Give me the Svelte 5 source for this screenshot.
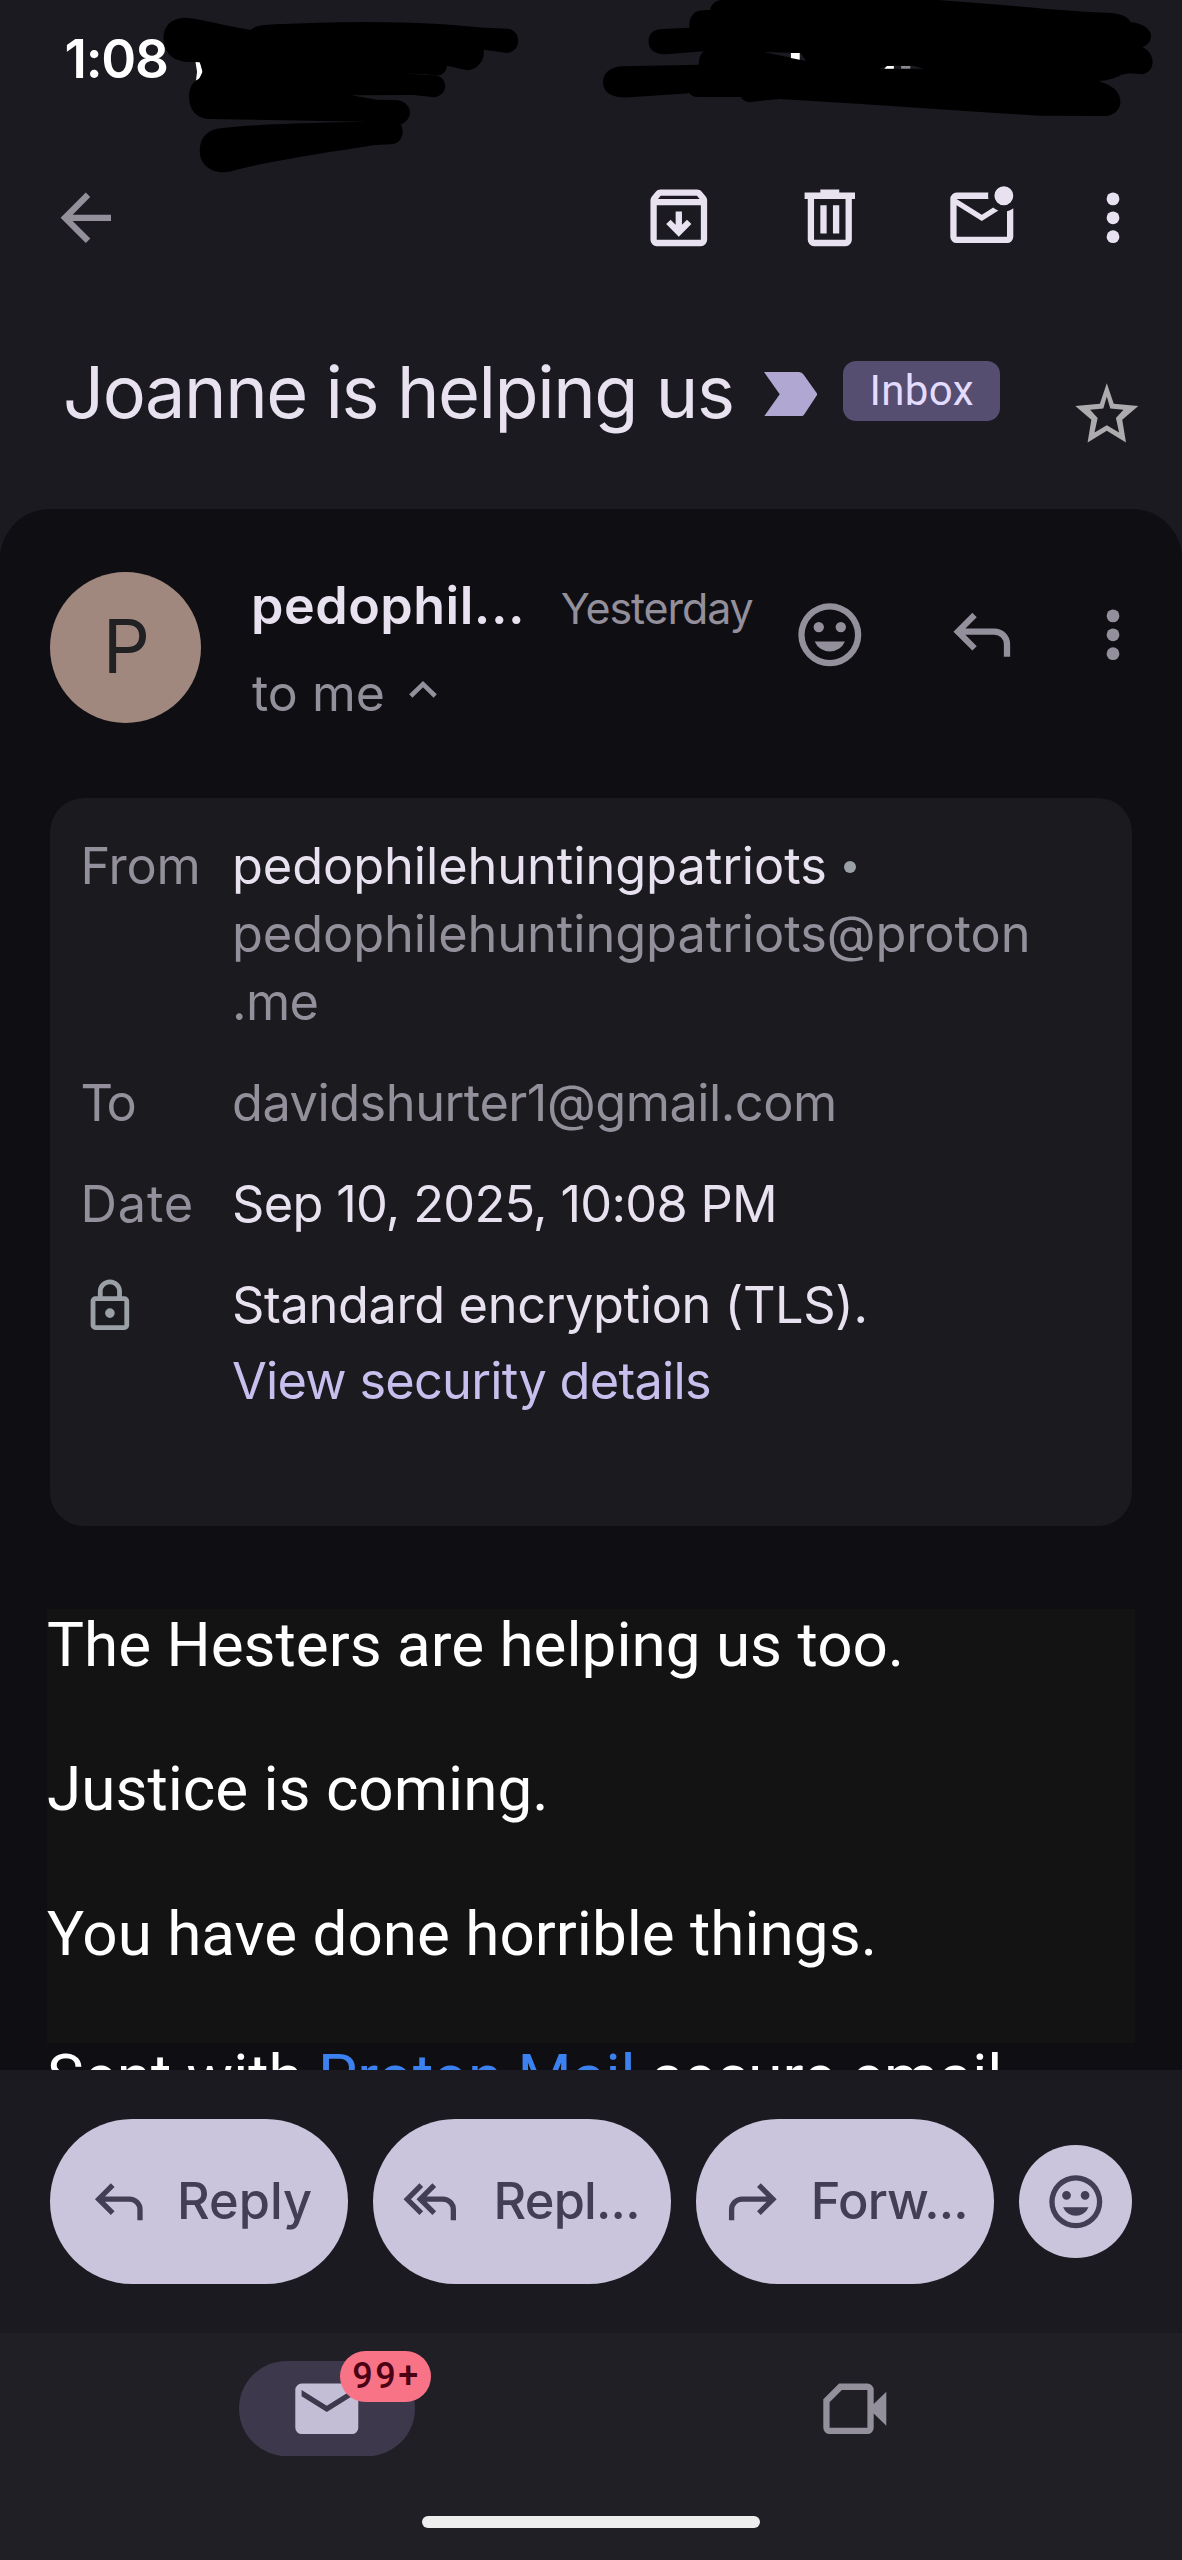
<script>
  const icons = {
    back: 'm12 20-8-8 8-8 1.4 1.425L7.825 11H20v2H7.825l5.6 5.6Z',
    archive:
      'M5 21q-.825 0-1.413-.587T3 19V6.525q0-.35.112-.675.113-.325.338-.6L4.7 3.725q.275-.35.687-.538Q5.8 3 6.25 3h11.5q.45 0 .863.187.412.188.687.538L20.55 5.25q.225.275.338.6.112.325.112.675V19q0 .825-.587 1.413T19 21ZM5.4 6h13.2l-.85-1H6.25ZM5 19h14V8H5Zm7-1 4-4-1.4-1.4-1.6 1.6V10h-2v4.2l-1.6-1.6L8 14Z',
    trash:
      'M7 21q-.825 0-1.413-.587T5 19V6H4V4h5V3h6v1h5v2h-1v13q0 .825-.587 1.413T17 21ZM17 6H7v13h10ZM9 17h2V8H9Zm4 0h2V8h-2Z',
    unread:
      'M4 20q-.825 0-1.413-.587T2 18V6q0-.825.587-1.413T4 4h10.1q-.1.5-.1 1t.1 1H4l8 5 3.65-2.275q.35.325.763.563.412.237.862.412L12 13 4 8v10h16V9.9q.575-.125 1.075-.35T22 9v9q0 .825-.587 1.413T20 20ZM19 8q-1.25 0-2.125-.875T16 5t.875-2.125T19 2t2.125.875T22 5t-.875 2.125T19 8Z',
    star:
      'M12 2 14.2 8.5 22 9.2 16.9 13.6 18.1 20.8 12 17.1 5.9 20.8 7.1 13.6 2 9.2 9.8 8.5ZM12 6.2 10.9 10 6.7 10.4 9.1 13 8.1 17.6 12 15.3 15.9 17.6 14.9 13 17.3 10.4 13.1 10Z',
    smile:
      'M12 2a10 10 0 1 0 0 20a10 10 0 1 0 0-20ZM12 4a8 8 0 1 1 0 16a8 8 0 1 1 0-16ZM8.5 7.9a1.65 1.65 0 1 0 0 3.3a1.65 1.65 0 1 0 0-3.3ZM15.5 7.9a1.65 1.65 0 1 0 0 3.3a1.65 1.65 0 1 0 0-3.3ZM7.2 14.1h9.6q-.6 1.5-1.9 2.35T12 17.3t-2.9-.85T7.2 14.1Z',
    reply:
      'M19 19v-4q0-1.25-.875-2.125T16 12H6.8l3.6 3.6L9 17l-6-6 6-6 1.4 1.4L6.8 10H16q2.075 0 3.538 1.462T21 15v4Z',
    replyAll:
      'M18 19v-4q0-1.25-.875-2.125T15 12H8.9l3.6 3.6L11.1 17l-6-6 6-6 1.4 1.4L8.9 10H15q2.075 0 3.538 1.462T20 15v4ZM6.2 17l-6-6 6-6 1.4 1.4L3 11l4.6 4.6Z',
    forward:
      'M5 19v-4q0-1.25.875-2.125T8 12h9.2l-3.6 3.6L15 17l6-6-6-6-1.4 1.4 3.6 3.6H8q-2.075 0-3.538 1.462T3 15v4Z',
    lock:
      'M6 22q-.825 0-1.413-.587T4 20V10q0-.825.587-1.413T6 8h1V6q0-2.075 1.463-3.537T12 1t3.538 1.463T17 6v2h1q.825 0 1.413.587T20 10v10q0 .825-.587 1.413T18 22ZM6 20h12V10H6Zm6-3q.825 0 1.413-.587T14 15t-.587-1.413T12 13t-1.413.587T10 15t.587 1.413T12 17ZM9 8h6V6q0-1.25-.875-2.125T12 3t-2.125.875T9 6Z',
    mail:
      'M4 20q-.825 0-1.413-.587T2 18V6q0-.825.587-1.413T4 4h16q.825 0 1.413.587T22 6v12q0 .825-.587 1.413T20 20ZM12 13l8-5V6l-8 5-8-5v2Z',
    meet:
      'M7 4h9q.825 0 1.413.587T18 6v4.5l4-3.9v10.8l-4-3.9V18q0 .825-.587 1.413T16 20H4q-.825 0-1.413-.587T2 18V9ZM7.9 6 4 9.9V18h12V6Z'
  };
  const paragraphs = ['The Hesters are helping us too.', 'Justice is coming.', 'You have done horrible things.'];
</script>

{#snippet icon(name)}
  <svg class="icon" viewBox="0 0 24 24" aria-hidden="true"><path fill-rule="evenodd" d={icons[name]} /></svg>
{/snippet}

{#snippet dots()}
  <svg class="dots" viewBox="0 0 36 75.6" aria-hidden="true">
    <circle cx="18" cy="18.9" r="6.4" /><circle cx="18" cy="37.8" r="6.4" /><circle cx="18" cy="56.7" r="6.4" />
  </svg>
{/snippet}

<div class="screen">
  <header>
    <div class="status">
      <span class="clock">1:08</span>
      <svg class="mark left" viewBox="0 0 1568 780" preserveAspectRatio="none" aria-hidden="true">
        <path fill="#fff" d="M510 180L524 188L529 216L524 232L512 244L515 215Z" />
        <path d="M482 53C520 55 560 70 655 90C665 78 680 75 720 73C860 65 1000 62 1160 73L1265 83L1325 86C1364 90 1364 155 1325 159L1264 149C1268 185 1245 210 1221 211L1168 197C1167 215 1155 225 1148 226L1050 219L1110 225L1140 226C1172 235 1172 285 1135 292L1080 285L918 286L985 299L1035 300C1080 305 1082 360 1047 373C1057 390 1055 430 1022 433L980 435C900 450 700 482 605 514C560 525 522 500 522 452C522 410 545 387 580 384C700 370 850 367 960 365L548 357C510 355 494 325 494 290C494 260 505 245 520 237L530 215L522 187L482 185C445 180 427 150 427 115C427 75 450 55 482 53Z" />
      </svg>
      <svg class="mark right" viewBox="0 0 1568 780" preserveAspectRatio="none" aria-hidden="true">
        <path d="M365 0L930 0L1100 15C1200 25 1300 35 1385 39C1410 42 1428 52 1433 66C1470 70 1487 90 1487 108C1487 125 1475 137 1465 142C1500 160 1500 215 1465 223L1430 220L1408 225C1395 235 1370 242 1350 243C1385 255 1407 275 1407 305C1407 330 1390 347 1365 348L1200 347L1110 341L700 310L515 297L440 306C425 306 418 298 416 291L300 291C290 291 285 285 281 280L125 292C80 295 55 280 55 247C55 215 80 200 105 199L305 194C305 175 310 162 318 154L220 163C190 163 174 150 174 123C174 98 190 88 210 87L281 83C278 55 290 32 315 31L335 30C337 12 350 2 365 0Z" />
        <path fill="#1b1a20" d="M475 156L572 160L586 183ZM778 206L800 197H865L893 206Z" />
        <path fill="#fff" d="M546 159H569V179L546 174ZM790 206L797 198H815V206Z" />
        <path fill="#8b8a8d" d="M834 198H858V206H834Z" />
      </svg>
    </div>
    <div class="toolbar">
      {@render icon('back')}
      <div class="tools">
        {@render icon('archive')}
        {@render icon('trash')}
        {@render icon('unread')}
        {@render dots()}
      </div>
    </div>
    <div class="subject">
      <h1>Joanne is helping us</h1>
      <svg class="important" viewBox="0 0 53.5 44.5" aria-hidden="true">
        <path d="M0 0H35Q38 0 39.5 2.5L53.5 22.3L40.5 42Q39 44.5 36 44.5H0L15.7 22.3Z" />
      </svg>
      <span class="label">Inbox</span>
      <div class="star">{@render icon('star')}</div>
    </div>
  </header>

  <main>
    <section class="sender">
      <div class="avatar">P</div>
      <div class="who">
        <div class="line"><strong>pedophil...</strong><time>Yesterday</time></div>
        <div class="line to">
          <span>to me</span>
          <svg class="caret" viewBox="0 0 28 17" aria-hidden="true"><path d="M1.8 15 14 3.2 26.2 15" /></svg>
        </div>
      </div>
      <div class="tools">
        {@render icon('smile')}
        {@render icon('reply')}
        {@render dots()}
      </div>
    </section>

    <dl class="details">
      <dt class="from">From</dt>
      <dd>
        <div class="bright name">pedophilehuntingpatriots<i></i></div>
        <div>pedophilehuntingpatriots@proton</div>
        <div class="tail">.me</div>
      </dd>
      <dt class="to-label">To</dt>
      <dd class="recipient">davidshurter1@gmail.com</dd>
      <dt class="date-label">Date</dt>
      <dd class="bright date">Sep 10, 2025, 10:08 PM</dd>
      <dt class="lock">{@render icon('lock')}</dt>
      <dd>
        <div class="bright tls">Standard encryption (TLS).</div>
        <div class="link">View security details</div>
      </dd>
    </dl>

    <article>
      <div class="text">
        {#each paragraphs as p}<p>{p}</p>{/each}
      </div>
      <p class="signature">Sent with <a href="#proton">Proton Mail</a> secure email</p>
    </article>
  </main>

  <div class="actions">
    <button>{@render icon('reply')}<span>Reply</span></button>
    <button class="all">{@render icon('replyAll')}<span>Repl...</span></button>
    <button class="fwd">{@render icon('forward')}<span>Forw...</span></button>
    <button class="react">{@render icon('smile')}</button>
  </div>

  <nav>
    <div class="tabs">
      <div class="pill">{@render icon('mail')}<span class="badge">99+</span></div>
      {@render icon('meet')}
    </div>
    <div class="home"></div>
  </nav>
</div>

<style>
  :global(body) { margin: 0; background: #1b1a20; }
  .screen {
    width: 1182px;
    height: 2560px;
    display: flex;
    flex-direction: column;
    overflow: hidden;
    background: #1b1a20;
    color: #e8e1ef;
    font-family: Inter, sans-serif;
  }
  .icon { width: 75.6px; height: 75.6px; flex: none; display: block; fill: currentColor; }
  .dots { width: 36px; height: 75.6px; flex: none; display: block; fill: currentColor; }
  .tools { display: flex; gap: 75.6px; }

  header { height: 508.7px; flex: none; display: flex; flex-direction: column; }
  .status { position: relative; height: 151.6px; padding: 28.7px 0 0 64.6px; flex: none; }
  .clock { font-size: 53px; line-height: 60px; font-weight: 600; letter-spacing: -1.29px; color: #fff; display: block; }
  .mark { position: absolute; top: 0; width: 600px; height: 260px; }
  .mark.left { left: 0; }
  .mark.right { left: 582px; }
  .toolbar { display: flex; justify-content: space-between; padding: 0 51.2px 0 48px; color: #e8e1ef; }
  .toolbar > :global(.icon) { color: #938f9b; }
  .subject { display: flex; align-items: flex-start; padding: 93.4px 37.7px 0 63px; }
  h1 { margin: 0; width: 700.5px; font-size: 72px; line-height: 85px; font-weight: 400; letter-spacing: -1.45px; white-space: nowrap; }
  .important { width: 53.5px; height: 44.5px; margin: 22.6px 26.4px 0 0; fill: #b0a8d3; }
  .label {
    box-sizing: border-box;
    width: 156.5px;
    height: 59.7px;
    margin-top: 11.8px;
    border-radius: 13px;
    background: #554e71;
    color: #e4dcff;
    font: 42px/60px Roboto, sans-serif;
    letter-spacing: .39px;
    text-align: center;
  }
  .star { margin: 28px 0 0 auto; color: #aeabae; }

  main {
    height: 1561px;
    flex: none;
    overflow: hidden;
    background: #0f0e13;
    border-radius: 50px 50px 0 0;
  }
  .sender { display: flex; height: 226.3px; padding: 63.3px 51.2px 0 50px; }
  .avatar {
    width: 151px;
    height: 151px;
    flex: none;
    border-radius: 50%;
    background: #a1887f;
    color: #212124;
    font-size: 74px;
    line-height: 149px;
    text-align: center;
    text-indent: 2px;
  }
  .who { margin: 4.4px 0 0 50px; }
  .line { display: flex; align-items: baseline; height: 60px; line-height: 60px; white-space: nowrap; }
  strong { width: 309.7px; font-size: 52px; font-weight: 600; letter-spacing: .5px; }
  time { padding-top: 1px; font-size: 43px; letter-spacing: -1.1px; color: #938f9b; }
  .to { margin-top: 26.9px; gap: 24px; font-size: 50px; color: #938f9b; padding-left: 1px; }
  .caret { width: 28px; height: 17px; margin-bottom: 7px; align-self: center; fill: none; stroke: #938f9b; stroke-width: 4.6; }
  .sender .tools { margin: 25.2px 0 0 auto; color: #938f9b; }

  .details {
    box-sizing: border-box;
    width: 1082px;
    height: 727.7px;
    margin: 0 50px;
    padding: 34px 30.5px 0;
    display: grid;
    grid-template-columns: 151.5px 1fr;
    align-content: start;
    row-gap: 33px;
    border-radius: 34px;
    background: #1b1a1f;
    color: #938f9b;
    font-size: 50.5px;
    line-height: 68px;
    letter-spacing: -.08px;
    white-space: nowrap;
  }
  dt, dd { margin: 0; }
  .bright { color: #e8e1ef; }
  .name { display: flex; align-items: center; }
  .name i { width: 12px; height: 12px; margin: 2px 0 0 17px; border-radius: 50%; background: #9aa0a6; }
  .from { letter-spacing: -.26px; }
  .tail { letter-spacing: -.64px; }
  .to-label { letter-spacing: -2.65px; }
  .date-label { letter-spacing: .8px; }
  .recipient { letter-spacing: -.49px; }
  .date { letter-spacing: -.71px; }
  .tls { letter-spacing: -.37px; }
  .link { margin-top: 7.3px; color: #c8bfee; letter-spacing: -.75px; }
  .lock { padding-top: 6px; color: #9aa0a6; }
  .lock :global(.icon) { width: 57.8px; height: 57.8px; }

  article { margin: 83.7px 47px 0; color: #fff; font: 62px/72.2px Roboto, sans-serif; white-space: nowrap; }
  .text { height: 434.3px; background: #131313; }
  p { margin: 0; }
  .text p { height: 144.4px; }
  .text p:first-child { margin-top: -.6px; }
  .signature { margin-top: -2px; }
  a { color: #3b82f0; text-decoration: none; }

  .actions {
    height: 263.6px;
    flex: none;
    box-sizing: border-box;
    padding: 0 50px;
    display: flex;
    align-items: center;
    gap: 24.7px;
  }
  button {
    box-sizing: border-box;
    width: 298.2px;
    height: 164.3px;
    flex: none;
    padding: 0 0 0 37px;
    display: flex;
    align-items: center;
    gap: 26.5px;
    border: 0;
    border-radius: 82.2px;
    background: #cac4dc;
    color: #423e53;
    font: 500 50.5px/60px Inter, sans-serif;
  }
  button span { padding-bottom: 1px; }
  button :global(.icon) { width: 63.6px; height: 63.6px; }
  .all { padding-left: 30.5px; letter-spacing: -.76px; }
  .fwd { padding-left: 25px; letter-spacing: -.78px; }
  .react { width: 113.4px; height: 113.4px; padding: 0; justify-content: center; }

  nav { height: 226.7px; flex: none; display: flex; flex-direction: column; background: #201f25; }
  .tabs { display: flex; align-items: center; gap: 402.3px; padding: 28px 0 0 239px; color: #938f9b; }
  .pill {
    position: relative;
    width: 176px;
    height: 94.7px;
    display: flex;
    align-items: center;
    justify-content: center;
    border-radius: 47.4px;
    background: #3d384b;
    color: #c3bdd6;
  }
  .badge {
    position: absolute;
    left: 101px;
    top: -10.3px;
    width: 90.5px;
    height: 50.7px;
    border-radius: 25.4px;
    background: #f97386;
    color: #4b0014;
    font: 500 36px/50px Roboto, sans-serif;
    letter-spacing: 2.6px;
    text-align: center;
    text-indent: 2.6px;
  }
  .home { width: 338px; height: 12px; margin: 60px auto 0; border-radius: 6px; background: #eee; }
</style>
